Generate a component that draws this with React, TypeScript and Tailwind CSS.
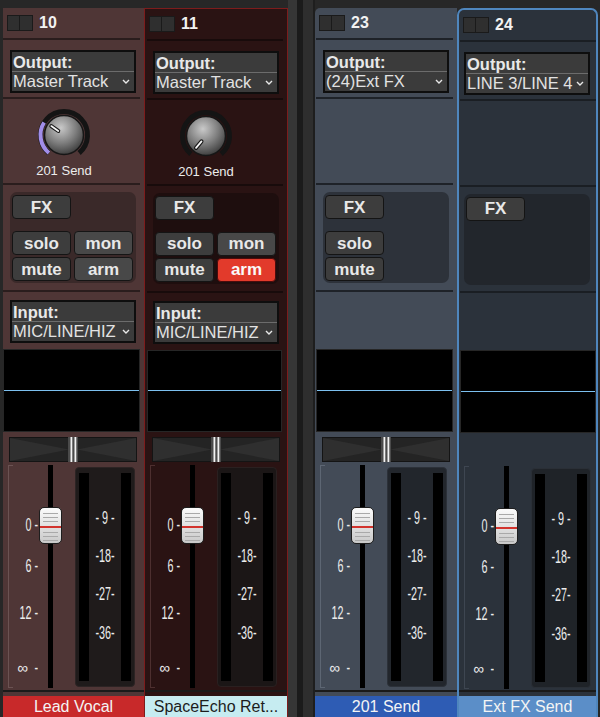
import React, { useId } from 'react';

type Cfg = {
  num: string;
  root: string;
  sep: string;
  boxMl: string;
  panel: string;
  meter: string;
  bracket: string;
  display: string;
  panMl: string;
  output: string;
  knob: null | { angle: number; purple: boolean };
  buttons: 'full' | 'fsm' | 'fx';
  arm: boolean;
  input: string | null;
  pan: boolean;
  label: string;
  labelCls: string;
};

function Chevron() {
  return (
    <svg width="8" height="5" viewBox="0 0 8 5" className="shrink-0">
      <polyline points="1,1 4,4 7,1" fill="none" stroke="#e8e8e8" strokeWidth="1.4" />
    </svg>
  );
}

function SelectBox({ label, value }: { label: string; value: string }) {
  return (
    <div className="w-[126px] border-2 border-[#0e0e0e] bg-[#3b3b3b] flex flex-col">
      <div className="h-[20px] border-b border-[#6c6c6c] text-[16.5px] font-bold leading-[20px] text-[#e8e8e8] pl-[1px]">
        {label}
      </div>
      <div className="h-[19px] flex items-center justify-between pl-[1px] pr-[4px] text-[16.5px] leading-[19px] text-[#e2e2e2] whitespace-nowrap overflow-hidden">
        <span>{value}</span>
        <Chevron />
      </div>
    </div>
  );
}

function Knob({ angle, purple }: { angle: number; purple: boolean }) {
  const id = useId().replace(/:/g, '');
  const cx = 27;
  const cy = 27;
  const p = (a: number, r: number) => {
    const t = (a * Math.PI) / 180;
    return [cx + r * Math.sin(t), cy - r * Math.cos(t)];
  };
  const arc = (a0: number, a1: number, r: number) => {
    const [x0, y0] = p(a0, r);
    const [x1, y1] = p(a1, r);
    const large = a1 - a0 > 180 ? 1 : 0;
    return `M${x0.toFixed(2)} ${y0.toFixed(2)} A${r} ${r} 0 ${large} 1 ${x1.toFixed(2)} ${y1.toFixed(2)}`;
  };
  const [ix0, iy0] = p(angle, 7);
  const [ix1, iy1] = p(angle, 15.5);
  return (
    <svg width="54" height="54" viewBox="0 0 54 54">
      <defs>
        <radialGradient id={`kg${id}`} cx="42%" cy="32%" r="72%">
          <stop offset="0" stopColor="#c9c9c9" />
          <stop offset="0.55" stopColor="#7d7d7d" />
          <stop offset="1" stopColor="#383838" />
        </radialGradient>
      </defs>
      <path d={arc(-140, 140, 23.5)} stroke="#141414" strokeWidth="5" fill="none" />
      {purple && <path d={arc(-140, -58, 23.5)} stroke="#a18de8" strokeWidth="4" fill="none" />}
      <circle cx={cx} cy={cy} r="19.5" fill={`url(#kg${id})`} stroke="#161616" strokeWidth="1.5" />
      <line x1={ix0} y1={iy0} x2={ix1} y2={iy1} stroke="#151515" strokeWidth="4" strokeLinecap="round" />
      <line x1={ix0} y1={iy0} x2={ix1} y2={iy1} stroke="#f5f5f5" strokeWidth="1.8" strokeLinecap="round" />
    </svg>
  );
}

function Btn({ children, light, red }: { children: React.ReactNode; light?: boolean; red?: boolean }) {
  const cls = red
    ? 'bg-[#e23a2b] border-[#4a0c0c] text-[#fafafa]'
    : light
    ? 'bg-[#484848] border-[#151515] text-[#e8e8e8]'
    : 'bg-[#3d3d3d] border-[#141414] text-[#e8e8e8]';
  return (
    <div
      className={`w-[59px] h-[24px] rounded-[4px] border ${cls} text-[17px] font-bold leading-none flex items-center justify-center`}
    >
      {children}
    </div>
  );
}

function Pan() {
  return (
    <svg width="128" height="25" viewBox="0 0 128 25">
      <rect x="0.5" y="0.5" width="127" height="24" fill="#242424" stroke="#141414" />
      <polygon points="1,1 60,12.5 1,24" fill="#2f2f2f" />
      <polygon points="127,1 68,12.5 127,24" fill="#2f2f2f" />
      <rect x="59" y="0" width="10" height="25" fill="#4a4a4a" />
      <rect x="61.5" y="0" width="1.8" height="25" fill="#f2f2f2" />
      <rect x="65.5" y="0" width="1.8" height="25" fill="#f2f2f2" />
    </svg>
  );
}

function FaderCap() {
  return (
    <div className="absolute left-0 top-[44px] w-[23px] h-[37px] rounded-[5px] border border-[#1e1e1e] bg-gradient-to-b from-[#fbfbfb] to-[#c9c9c9] flex flex-col items-center pt-[5px]">
      <div className="w-[15px] h-px bg-[#a9a9a9]" />
      <div className="w-[15px] h-px bg-[#a9a9a9] mt-[3px]" />
      <div className="w-[15px] h-px bg-[#a9a9a9] mt-[3px]" />
      <div className="w-[21px] h-[2px] bg-[#d2332d] mt-[4px]" />
      <div className="w-[15px] h-px bg-[#a9a9a9] mt-[4px]" />
      <div className="w-[15px] h-px bg-[#a9a9a9] mt-[3px]" />
      <div className="w-[15px] h-px bg-[#a9a9a9] mt-[3px]" />
    </div>
  );
}

const NARROW = "font-['Liberation_Sans',Arial,sans-serif]";

function ScaleLabel({ text, mt }: { text: string; mt: string }) {
  return (
    <div className={`${mt} h-[16px] leading-[16px] whitespace-nowrap`}>
      <span className={`inline-block origin-right scale-x-[0.6] text-[18px] text-[#ececec] ${NARROW}`}>{text}</span>
    </div>
  );
}

function InfLabel({ mt }: { mt: string }) {
  return (
    <div className={`${mt} h-[16px] leading-[16px] whitespace-nowrap flex items-center gap-[4px] text-[#ececec]`}>
      <span className="text-[15px] leading-[16px]">∞</span>
      <span className={`inline-block origin-right scale-x-[0.6] text-[18px] ${NARROW}`}>-</span>
    </div>
  );
}

function MeterLabel({ text, mt }: { text: string; mt: string }) {
  return (
    <div className={`${mt} h-[16px] leading-[16px] whitespace-nowrap`}>
      <span className={`inline-block origin-center scale-x-[0.6] text-[18px] text-[#ececec] ${NARROW}`}>{text}</span>
    </div>
  );
}

function Channel({ c }: { c: Cfg }) {
  return (
    <div className={`mt-[8px] flex flex-col shrink-0 ${c.root}`}>
      {/* header */}
      <div className="h-[30px] flex items-center pl-[4px]">
        <div className="flex border border-[#1a1a1a]">
          <div className="w-[12px] h-[14px] bg-[#2f2f2f] border-r border-[#1a1a1a]" />
          <div className="w-[12px] h-[14px] bg-[#2f2f2f]" />
        </div>
        <span className="ml-[6px] text-[16px] font-bold text-[#f2f2f2] leading-none">{c.num}</span>
      </div>
      <div className={c.sep} />
      {/* output */}
      <div className={`h-[57px] pt-[10px] ${c.boxMl}`}>
        <SelectBox label="Output:" value={c.output} />
      </div>
      <div className={c.sep} />
      {/* knob */}
      <div className="h-[84px] w-[122px] flex flex-col items-center pt-[9px]">
        {c.knob && (
          <>
            <Knob angle={c.knob.angle} purple={c.knob.purple} />
            <div className="mt-[2px] text-[13px] leading-[14px] text-[#ececec]">201 Send</div>
          </>
        )}
      </div>
      <div className={c.sep} />
      {/* buttons */}
      <div className={`h-[105px] pt-[7px] ${c.boxMl}`}>
        <div className={`w-[126px] h-[91px] rounded-[7px] ${c.panel} pt-[3px] pl-[2px]`}>
          <Btn>FX</Btn>
          {c.buttons !== 'fx' && (
            <div className="mt-[12px] flex gap-[3px]">
              <div className="flex flex-col gap-[2px]">
                <Btn>solo</Btn>
                <Btn>mute</Btn>
              </div>
              {c.buttons === 'full' && (
                <div className="flex flex-col gap-[2px]">
                  <Btn light>mon</Btn>
                  <Btn light red={c.arm}>
                    arm
                  </Btn>
                </div>
              )}
            </div>
          )}
        </div>
      </div>
      <div className={c.sep} />
      {/* input */}
      <div className={`h-[57px] pt-[8px] ${c.boxMl}`}>{c.input && <SelectBox label="Input:" value={c.input} />}</div>
      {/* display */}
      <div className={`h-[83px] bg-black border border-[#262626] flex flex-col justify-center ${c.display}`}>
        <div className="h-px bg-[#7cc0ef]" />
      </div>
      {/* pan */}
      <div className={`h-[31px] pt-[5px] ${c.panMl}`}>{c.pan && <Pan />}</div>
      {/* fader + meter */}
      <div className="h-[227px] flex">
        <div className={`ml-[5px] mt-[2px] w-[5px] h-[223px] border-l border-y ${c.bracket}`} />
        <div className="w-[25px] flex flex-col items-end">
          <ScaleLabel text="0 -" mt="mt-[54px]" />
          <ScaleLabel text="6 -" mt="mt-[25px]" />
          <ScaleLabel text="12 -" mt="mt-[31px]" />
          <InfLabel mt="mt-[39px]" />
        </div>
        <div className="relative ml-[1px] w-[23px] h-full">
          <div className="mx-auto mt-[2px] w-[5px] h-[223px] bg-black" />
          <FaderCap />
        </div>
        <div className={`ml-[13px] mt-[4px] w-[60px] h-[220px] rounded-[4px] ${c.meter} flex px-[3px] py-[5px]`}>
          <div className="w-[15px] h-full bg-black" />
          <div className="flex-1 flex flex-col items-center">
            <MeterLabel text="- 9 -" mt="mt-[37px]" />
            <MeterLabel text="-18-" mt="mt-[22px]" />
            <MeterLabel text="-27-" mt="mt-[22px]" />
            <MeterLabel text="-36-" mt="mt-[23px]" />
          </div>
          <div className="w-[16px] h-full bg-black" />
        </div>
      </div>
      <div className={`h-[2px] bg-[#1a1a1a]`} />
      <div className="h-[4px]" />
      <div className={`h-[21px] text-[16px] leading-[21px] text-center whitespace-nowrap overflow-hidden ${c.labelCls}`}>
        {c.label}
      </div>
    </div>
  );
}

const channels: Cfg[] = [
  {
    num: '10',
    root: 'w-[141px] bg-[#4f3636]',
    sep: 'h-[2px] mr-[4px] bg-[#2a1d1d]',
    boxMl: 'pl-[7px]',
    panel: 'bg-[#3a2929]',
    meter: 'bg-[#1f1b1b] border border-[#2c2424]',
    bracket: 'border-[#6b5353]',
    display: 'mr-[4px]',
    panMl: 'pl-[6px]',
    output: 'Master Track',
    knob: { angle: -55, purple: true },
    buttons: 'full',
    arm: false,
    input: 'MIC/LINE/HIZ',
    pan: true,
    label: 'Lead Vocal',
    labelCls: 'bg-[#c8292a] text-[#f4f4f4]',
  },
  {
    num: '11',
    root: 'w-[144px] bg-[#2a1313] border-x border-t border-[#7d1c1c]',
    sep: 'h-[2px] ml-[2px] mr-[4px] bg-[#180b0b]',
    boxMl: 'pl-[8px]',
    panel: 'bg-[#1e0e0e]',
    meter: 'bg-[#1b1616] border border-[#2a2020]',
    bracket: 'border-[#4d2f2f]',
    display: 'ml-[2px] mr-[5px]',
    panMl: 'pl-[7px]',
    output: 'Master Track',
    knob: { angle: -140, purple: false },
    buttons: 'full',
    arm: true,
    input: 'MIC/LINE/HIZ',
    pan: true,
    label: 'SpaceEcho Ret...',
    labelCls: 'bg-[#c6ecf1] text-[#1c1c1c]',
  },
  {
    num: '23',
    root: 'w-[142px] bg-[#434b57] rounded-tl-[5px]',
    sep: 'h-[2px] ml-[1px] mr-[4px] bg-[#1e2228]',
    boxMl: 'pl-[8px]',
    panel: 'bg-[#2d323a]',
    meter: 'bg-[#22262c] border border-[#2c3139]',
    bracket: 'border-[#5d6673]',
    display: 'ml-[1px] mr-[4px]',
    panMl: 'pl-[7px]',
    output: '(24)Ext FX',
    knob: null,
    buttons: 'fsm',
    arm: false,
    input: null,
    pan: true,
    label: '201 Send',
    labelCls: 'bg-[#2e5cb4] text-[#f4f4f4]',
  },
  {
    num: '24',
    root: 'w-[141px] bg-[#2b323b] border-2 border-b-0 border-[#4f86bd] rounded-t-[7px]',
    sep: 'h-[2px] ml-[1px] bg-[#1a1e23]',
    boxMl: 'pl-[5px]',
    panel: 'bg-[#22262c]',
    meter: 'bg-[#1f2328] border border-[#2a2f36]',
    bracket: 'border-[#3e4651]',
    display: 'ml-[1px]',
    panMl: 'pl-[5px]',
    output: 'LINE 3/LINE 4',
    knob: null,
    buttons: 'fx',
    arm: false,
    input: null,
    pan: false,
    label: 'Ext FX Send',
    labelCls: 'bg-[#5b8ec8] text-[#f4f4f4]',
  },
];

export default function App() {
  return (
    <div className="w-[600px] h-[717px] overflow-hidden bg-[#272727] flex font-['Liberation_Sans',Arial,sans-serif]">
      <div className="w-[3px] shrink-0" />
      <Channel c={channels[0]} />
      <Channel c={channels[1]} />
      <div className="flex shrink-0 h-full">
        <div className="w-[9px] bg-[#363636]" />
        <div className="w-[6px] bg-[#1b1b1b]" />
        <div className="w-[10px] bg-[#2e2e2e]" />
        <div className="w-[2px] bg-[#1e1e1e]" />
      </div>
      <Channel c={channels[2]} />
      <Channel c={channels[3]} />
      <div className="flex-1" />
    </div>
  );
}
